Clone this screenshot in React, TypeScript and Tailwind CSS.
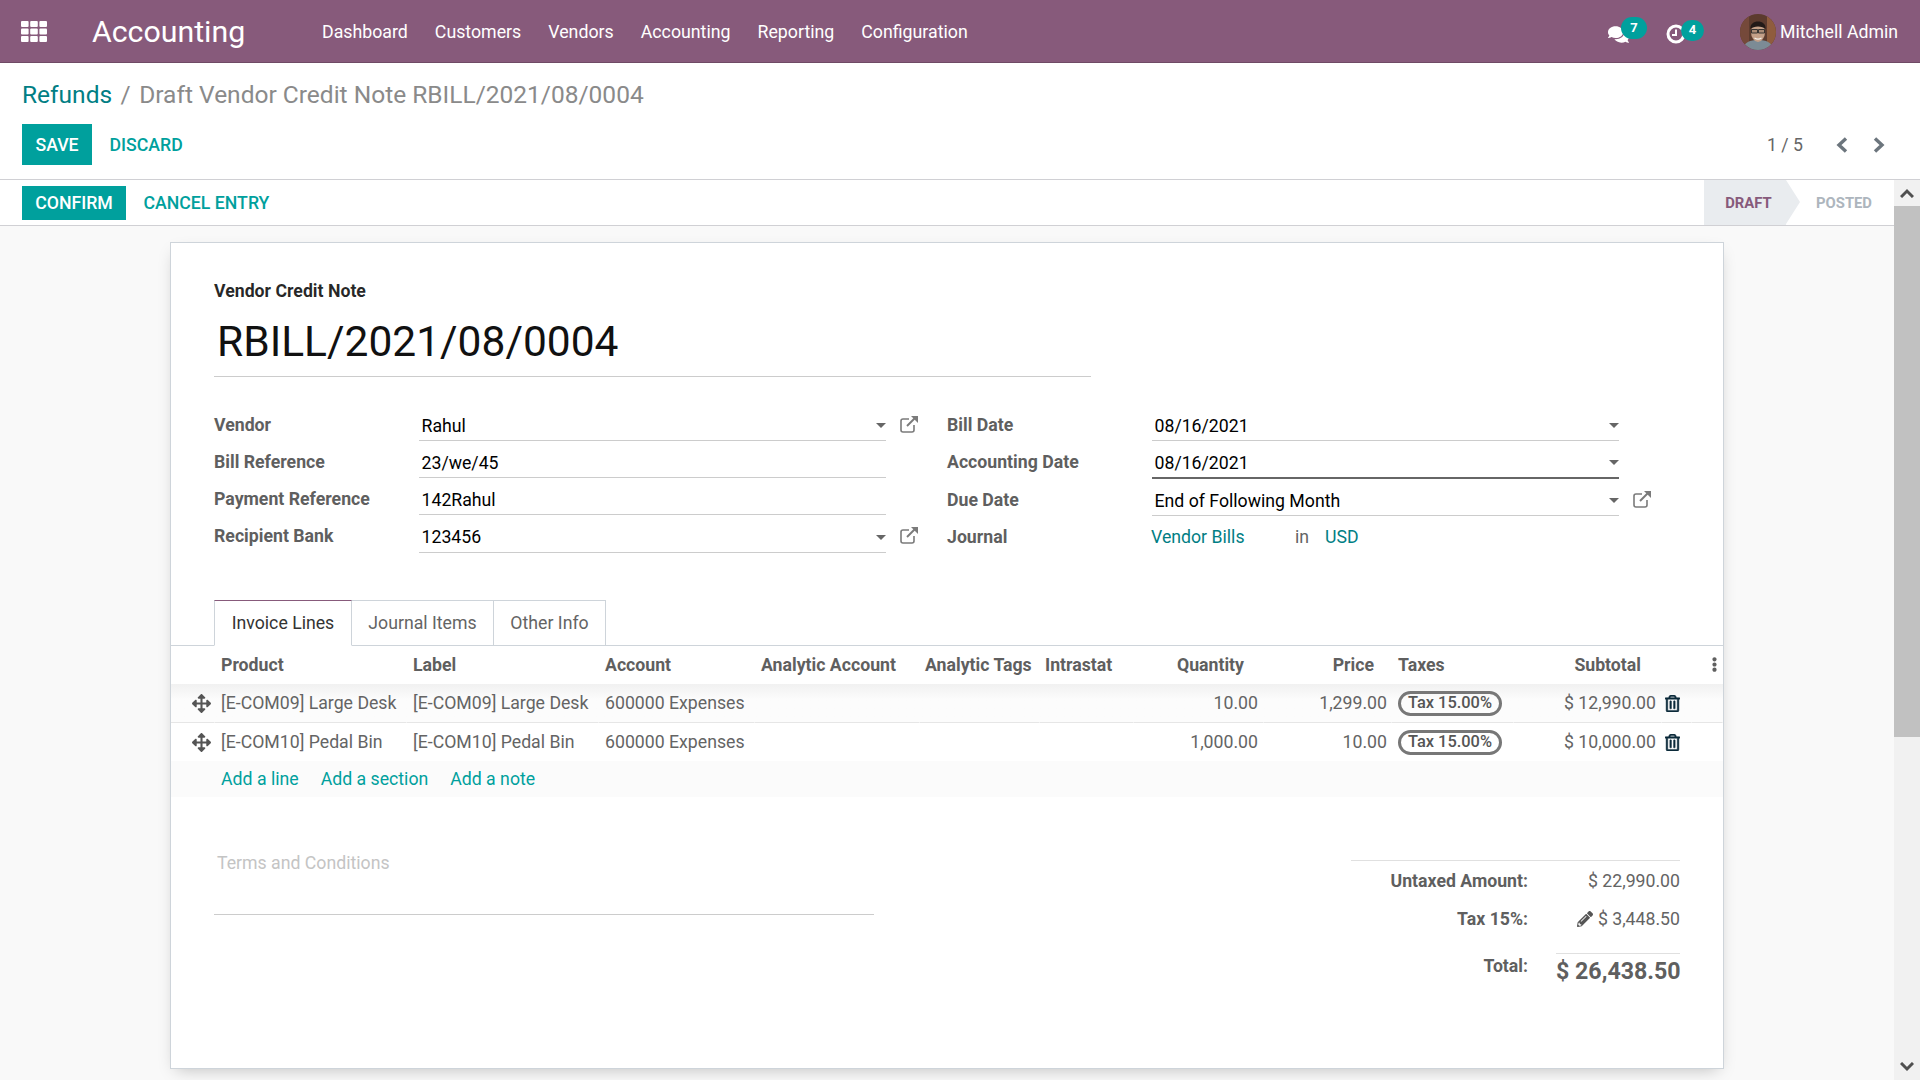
import React from "react";
import { FaComments, FaArrowsAlt, FaRegTrashAlt, FaEllipsisV, FaPencilAlt } from "react-icons/fa";

const ExtLink = () => (
  <svg viewBox="0 0 20 20" className="w-[20px] h-[20px] text-[#7b7b7b]" fill="none" stroke="currentColor" strokeWidth="1.6">
    <path d="M15 11v5a2 2 0 0 1-2 2H4a2 2 0 0 1-2-2V7a2 2 0 0 1 2-2h6" />
    <path d="M8 12 17 3" strokeWidth="2" />
    <path d="M12 2h7v7z" fill="currentColor" stroke="none" />
  </svg>
);

const Chevron = ({ d, cls }: { d: string; cls: string }) => (
  <svg viewBox="0 0 14 16" className={cls} fill="none" stroke="currentColor" strokeWidth="3.4">
    <path d={d} />
  </svg>
);

const Caret = () => <span className="w-0 h-0 border-x-[5px] border-x-transparent border-t-[5px] border-t-[#666] shrink-0" />;

const Grid3 = () => (
  <svg viewBox="0 0 26 21" className="ml-[21px] w-[26px] h-[21px]" fill="currentColor">
    {[0, 1, 2].flatMap((r) =>
      [0, 1, 2].map((c) => <rect key={`${r}${c}`} x={c * 9.2} y={r * 7.5} width="7.6" height="6" rx="1" />)
    )}
  </svg>
);

const Clock = () => (
  <svg viewBox="0 0 20 20" className="w-[20px] h-[20px] mt-[4px] shrink-0" fill="none" stroke="#fff">
    <circle cx="10" cy="10" r="8" strokeWidth="3" />
    <path d="M10 5.5V11H6" strokeWidth="2" />
  </svg>
);

const Avatar = () => (
  <svg viewBox="0 0 36 36" className="w-[36px] h-[36px] rounded-full shrink-0">
    <rect width="36" height="36" fill="#5c3b2e" />
    <rect x="0" y="0" width="9" height="36" fill="#75493a" />
    <rect x="27" y="0" width="9" height="36" fill="#8f5c3e" />
    <path d="M3 36c1-8 7-10 15-10s14 2 15 10z" fill="#7c8b95" />
    <ellipse cx="18" cy="18" rx="7" ry="10" fill="#c4a088" />
    <path d="M10.5 15c-1.5-10 16.500-10 15 0-3-3.500-12-3.500-15 0z" fill="#221a18" />
    <path d="M11.500 15.500h6v3.500h-6zM18.500 15.500h6v3.500h-6z" fill="#00000022" stroke="#2a2a2a" strokeWidth="0.9" />
    <path d="M14.500 24c2 1.300 5 1.300 7 0" stroke="#f5f0ea" strokeWidth="1.300" fill="none" />
  </svg>
);

function Row({ label, value, caret, ext, focus, tall }: { label: string; value: string; caret?: boolean; ext?: boolean; focus?: boolean; tall?: boolean }) {
  return (
    <div className={`flex items-stretch ${tall ? "h-[38px]" : "h-[37px]"}`}>
      <div className="w-[205px] shrink-0 font-bold text-[#5f5f5f] leading-[42px]">{label}</div>
      <div className={`w-[467px] shrink-0 flex items-center justify-between pl-[2.5px] pr-0 pt-[7px] text-black ${focus ? "border-b-2 border-[#666]" : "border-b border-[#ccc]"}`}>
        <span>{value}</span>
        {caret && <Caret />}
      </div>
      {ext && <div className="ml-[13px] pt-[10px]"><ExtLink /></div>}
    </div>
  );
}

const colsCls = "grid grid-cols-[44px_192px_192px_156px_165px_120px_94px_130px_128px_122px_148px_30px_31px]";
const cellBase = "border-r border-r-transparent flex items-center px-[6px] whitespace-nowrap";

function Line({ code, qty, price, sub, shade, last }: { code: string; qty: string; price: string; sub: string; shade?: boolean; last?: boolean }) {
  const bg = shade ? "h-[39px] bg-gradient-to-b from-[#f1f1f1] to-[#fcfcfc] to-40%" : "h-[38px]";
  const cell = `${cellBase} ${last ? "" : "border-b border-b-[#e6e6e6]"}`;
  return (
    <div className={`${colsCls} text-[#646464] ${bg}`}>
      <div className={`${cell} justify-end !pr-[3px] !pl-0 text-[#555]`}><FaArrowsAlt className="w-[19px] h-[19px]" /></div>
      <div className={cell}>{code}</div>
      <div className={cell}>{code}</div>
      <div className={cell}>600000 Expenses</div>
      <div className={cell}></div>
      <div className={cell}></div>
      <div className={cell}></div>
      <div className={`${cell} justify-end !pr-[5px]`}>{qty}</div>
      <div className={`${cell} justify-end !pr-[4px]`}>{price}</div>
      <div className={cell}>
        <span className="border-[3px] border-[#777] rounded-full h-[25px] px-[7px] flex items-center text-[16.4px] font-medium text-[#555]">Tax 15.00%</span>
      </div>
      <div className={`${cell} justify-end !pr-[5px]`}>{sub}</div>
      <div className={`${cell} !px-0`}><FaRegTrashAlt className="w-[15px] h-[17px] ml-[3px] text-[#0b2a3a]" stroke="currentColor" strokeWidth={14} /></div>
      <div className={cell}></div>
    </div>
  );
}

export default function App() {
  return (
    <div className="w-[1920px] h-[1080px] overflow-hidden flex flex-col bg-white font-[Roboto,sans-serif] text-[17.7px] leading-[24px]">
      {/* top bar */}
      <header className="h-[63px] shrink-0 bg-[#875a7b] border-b border-[#6f4a65] flex items-center text-white pt-[1px]">
        <Grid3 />
        <div className="ml-[45px] text-[30.3px] w-[230px]">Accounting</div>
        <nav className="flex gap-[27px] text-[17.75px]">
          {["Dashboard", "Customers", "Vendors", "Accounting", "Reporting", "Configuration"].map((n) => (
            <span key={n}>{n}</span>
          ))}
        </nav>
        <div className="ml-auto flex items-center mr-[22px]">
          <div className="flex items-start">
            <FaComments className="w-[21px] h-[19px] mt-[6px]" />
            <span className="w-[26px] h-[22px] -ml-[8px] -mt-[2px] rounded-full bg-[#00a09d] text-[13px] font-bold flex items-center justify-center">7</span>
          </div>
          <div className="flex items-start ml-[19px]">
            <Clock />
            <span className="w-[23px] h-[21px] -ml-[5px] rounded-full bg-[#00a09d] text-[13px] font-bold flex items-center justify-center">4</span>
          </div>
          <div className="ml-[36px]"><Avatar /></div>
          <span className="ml-[4px]">Mitchell Admin</span>
        </div>
      </header>

      {/* control panel */}
      <section className="h-[117px] shrink-0 border-b border-[#d0d0d4] px-[22px] pt-[15px]">
        <div className="text-[24.5px] leading-[33px] text-[#8a8a8a]">
          <span className="text-[#017e84]">Refunds</span>
          <span className="mx-[8.5px]">/</span>
          <span>Draft Vendor Credit Note RBILL/2021/08/0004</span>
        </div>
        <div className="flex items-center mt-[13px]">
          <button className="h-[41px] w-[70px] bg-[#00a09d] text-white font-medium">SAVE</button>
          <button className="ml-[17.5px] text-[#00a09d] font-medium">DISCARD</button>
          <div className="ml-auto text-[#666] mr-[32px]">1 / 5</div>
          <Chevron d="M11 1.5 4 8l7 6.5" cls="w-[14px] h-[16px] text-[#6c757d] mr-[23px]" />
          <Chevron d="M3 1.5 10 8l-7 6.5" cls="w-[14px] h-[16px] text-[#6c757d] mr-[12px]" />
        </div>
      </section>

      <div className="flex flex-1 min-h-0">
        <main className="flex-1 min-w-0 bg-[#f9f9f9]">
          {/* status bar */}
          <div className="h-[46px] border-b border-[#d0d0d4] bg-white flex items-center pl-[22px] pr-0">
            <button className="h-[34px] w-[104px] bg-[#00a09d] text-white font-medium">CONFIRM</button>
            <button className="ml-[17.5px] text-[#00a09d] font-medium">CANCEL ENTRY</button>
            <div className="ml-auto flex h-full text-[14.8px] font-bold">
              <div className="relative w-[82px] bg-[#e9ecef] text-[#875a7b] flex items-center justify-center pl-[7px]">
                DRAFT
                <span className="absolute left-full top-0 w-0 h-0 border-y-[22.5px] border-y-transparent border-l-[14px] border-l-[#e9ecef]" />
              </div>
              <div className="w-[108px] flex items-center justify-end pr-[22px] text-[#adb5bd]">POSTED</div>
            </div>
          </div>

          {/* sheet */}
          <div className="mt-[16px] ml-[170px] w-[1554px] h-[827px] bg-white border border-[#ced4da] shadow-[0_6px_16px_-6px_rgba(0,0,0,0.25)] text-[#646464]">
            <div className="px-[43px]">
              <div className="pt-[36px] font-bold text-black/85 leading-[24px]">Vendor Credit Note</div>
              <div className="w-[877px] mt-[14px] h-[60px] border-b border-[#ccc] pl-[3px] text-[42.5px] leading-[50px] text-[#111]">RBILL/2021/08/0004</div>
              <div className="flex mt-[27px]">
                <div className="w-[733px] shrink-0">
                  <Row label="Vendor" value="Rahul" caret ext />
                  <Row label="Bill Reference" value="23/we/45" />
                  <Row label="Payment Reference" value="142Rahul" />
                  <Row tall label="Recipient Bank" value="123456" caret ext />
                </div>
                <div className="flex-1">
                  <Row label="Bill Date" value="08/16/2021" caret />
                  <Row tall label="Accounting Date" value="08/16/2021" caret focus />
                  <Row label="Due Date" value="End of Following Month" caret ext />
                  <div className="flex h-[37px]">
                    <div className="w-[204px] font-bold text-[#5f5f5f] leading-[42px]">Journal</div>
                    <div className="leading-[43px] flex">
                      <span className="text-[#017e84] w-[144px]">Vendor Bills</span>
                      <span className="w-[30px]">in</span>
                      <span className="text-[#017e84]">USD</span>
                    </div>
                  </div>
                </div>
              </div>
            </div>

            {/* tabs */}
            <div className="mt-[47px] h-[46px] border-b border-[#ced4da] pl-[43px] flex">
              <div className="w-[138px] h-[46px] border border-[#ced4da] border-t-[#875a7b] border-b-white bg-white text-[#333] flex items-center justify-center">Invoice Lines</div>
              <div className="w-[142px] h-[45px] border-r border-t border-[#ced4da] flex items-center justify-center">Journal Items</div>
              <div className="w-[112px] h-[45px] border-r border-t border-[#ced4da] flex items-center justify-center">Other Info</div>
            </div>

            {/* table */}
            <div className={`${colsCls} h-[38px] font-bold text-[#5f5f5f]`}>
              <div />
              <div className="px-[6px] flex items-center">Product</div>
              <div className="px-[6px] flex items-center">Label</div>
              <div className="px-[6px] flex items-center">Account</div>
              <div className="px-[6px] flex items-center whitespace-nowrap">Analytic Account</div>
              <div className="pl-[5px] flex items-center whitespace-nowrap">Analytic Tags</div>
              <div className="px-[5px] flex items-center">Intrastat</div>
              <div className="pr-[20px] flex items-center justify-end">Quantity</div>
              <div className="pr-[18px] flex items-center justify-end">Price</div>
              <div className="px-[6px] flex items-center">Taxes</div>
              <div className="pr-[21px] flex items-center justify-end">Subtotal</div>
              <div />
              <div className="flex items-center justify-center pl-[14px] pb-[2px]"><FaEllipsisV className="w-[13px] h-[15px]" /></div>
            </div>
            <Line shade code="[E-COM09] Large Desk" qty="10.00" price="1,299.00" sub="$ 12,990.00" />
            <Line last code="[E-COM10] Pedal Bin" qty="1,000.00" price="10.00" sub="$ 10,000.00" />
            <div className="h-[36px] bg-[#fbfbfb] pl-[50px] flex items-center gap-[22px] text-[#00a09d]">
              <span>Add a line</span>
              <span>Add a section</span>
              <span>Add a note</span>
            </div>

            {/* footer */}
            <div className="flex px-[43px]">
              <div className="w-[660px] h-[118px] pt-[54px] pl-[3px] border-b border-[#ccc] text-[#c4c4c4]">Terms and Conditions</div>
              <div className="ml-auto w-[329px] mt-[63px] border-t border-[#e0e0e0]">
                <div className="grid grid-cols-[177px_152px] auto-rows-[38px] items-center pt-[1px]">
                  <div className="text-right font-bold text-[#5f5f5f]">Untaxed Amount:</div>
                  <div className="text-right">$ 22,990.00</div>
                  <div className="text-right font-bold text-[#5f5f5f]">Tax 15%:</div>
                  <div className="flex items-center justify-end">
                    <FaPencilAlt className="w-[16px] h-[16px] mr-[5px] text-[#555]" />$ 3,448.50
                  </div>
                </div>
                <div className="flex">
                  <div className="w-[177px] text-right font-bold text-[#5f5f5f] mt-[16px]">Total:</div>
                  <div className="ml-[28px] w-[124px] mt-[15px] border-t border-[#e0e0e0] text-right font-bold text-[23.2px] leading-[35px] text-[#5f5f5f] whitespace-nowrap">$ 26,438.50</div>
                </div>
              </div>
            </div>
          </div>
        </main>

        {/* scrollbar */}
        <div className="w-[26px] shrink-0 bg-[#f1f1f1] flex flex-col">
          <div className="h-[26px] flex items-center justify-center text-[#505050]">
            <svg viewBox="0 0 14 10" className="w-[14px] h-[10px]" fill="none" stroke="currentColor" strokeWidth="3"><path d="M1 9l6-6 6 6" /></svg>
          </div>
          <div className="h-[531px] bg-[#c1c1c1]" />
          <div className="flex-1" />
          <div className="h-[26px] flex items-center justify-center text-[#505050]">
            <svg viewBox="0 0 14 10" className="w-[14px] h-[10px]" fill="none" stroke="currentColor" strokeWidth="3"><path d="M1 1l6 6 6-6" /></svg>
          </div>
        </div>
      </div>
    </div>
  );
}
